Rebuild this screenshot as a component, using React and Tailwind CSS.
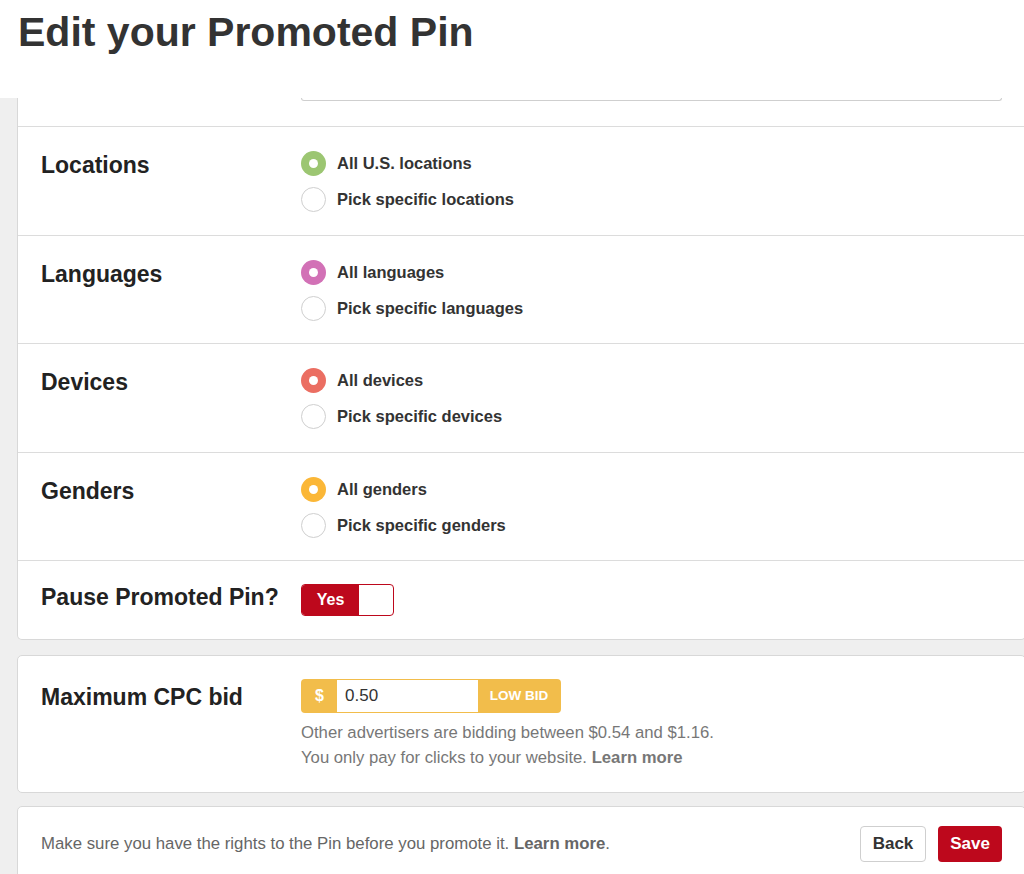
import React, { useState } from "react";

const font = { fontFamily: '"Liberation Sans", Arial, sans-serif' };

function Radio({ checked, color, label }) {
  return (
    <label className="flex items-center h-[25px] cursor-pointer">
      {checked ? (
        <span className={`w-[25px] h-[25px] rounded-full flex items-center justify-center ${color}`}>
          <span className="w-[9px] h-[9px] rounded-full bg-white" />
        </span>
      ) : (
        <span className="w-[25px] h-[25px] rounded-full border border-[#cfcfcf] bg-white" />
      )}
      <span className="ml-[11px] text-[16.5px] font-bold text-[#333]">{label}</span>
    </label>
  );
}

function RadioSection({ title, color, options }) {
  const [value, setValue] = useState(0);
  return (
    <div className="flex border-t border-[#dcdcdc] px-[23px] pt-[24px] pb-[22.5px]">
      <div className="w-[260px] text-[23px] font-bold text-[#222] leading-[28px]">{title}</div>
      <div className="flex flex-col gap-[11px]">
        {options.map((opt, i) => (
          <div key={opt} onClick={() => setValue(i)}>
            <Radio checked={value === i} color={color} label={opt} />
          </div>
        ))}
      </div>
    </div>
  );
}

export default function App() {
  const [paused, setPaused] = useState(true);
  const [bid, setBid] = useState("0.50");

  const sections = [
    { title: "Locations", color: "bg-[#9cc672]", options: ["All U.S. locations", "Pick specific locations"] },
    { title: "Languages", color: "bg-[#d271b6]", options: ["All languages", "Pick specific languages"] },
    { title: "Devices", color: "bg-[#eb6e62]", options: ["All devices", "Pick specific devices"] },
    { title: "Genders", color: "bg-[#fbb737]", options: ["All genders", "Pick specific genders"] },
  ];

  return (
    <div className="min-h-screen w-full overflow-hidden bg-[#efefef]" style={font}>
      <div className="h-[98px] bg-white px-[18px] pt-[11px]">
        <h1 className="text-[41px] leading-[42px] font-bold text-[#333]">Edit your Promoted Pin</h1>
      </div>

      <div className="pl-[17px] flex flex-col">
        <div className="w-[1009px] bg-white border-x border-b border-[#d8d8d8] rounded-b-[5px]">
          <div className="h-[28px] flex px-[23px]">
            <div className="w-[260px]" />
            <div className="flex-1 h-[3px] border-x border-b border-[#cfcfcf] rounded-b-[4px]" />
          </div>

          {sections.map((s) => (
            <RadioSection key={s.title} {...s} />
          ))}

          <div className="flex items-center border-t border-[#dcdcdc] h-[79px] px-[23px]">
            <div className="w-[260px] text-[23px] leading-[28px] font-bold text-[#222] pb-[7px]">Pause Promoted Pin?</div>
            <button
              onClick={() => setPaused(!paused)}
              className="flex w-[93px] h-[32px] rounded-[4px] border border-[#bd081c] overflow-hidden bg-white"
            >
              <span className="w-[57px] h-full bg-[#bd081c] text-white text-[16px] font-bold flex items-center justify-center">
                {paused ? "Yes" : "No"}
              </span>
              <span className="flex-1" />
            </button>
          </div>
        </div>

        <div className="mt-[15px] w-[1009px] bg-white border border-[#d8d8d8] rounded-[5px] px-[23px] pt-[23px] pb-[22px] flex">
          <div className="w-[260px] text-[23px] leading-[28px] font-bold text-[#222] pt-[4px]">Maximum CPC bid</div>
          <div>
            <div className="flex h-[34px] w-[260px] rounded-[4px] bg-[#f2bd4b] p-[1px]">
              <span className="w-[35px] flex items-center justify-center text-white font-bold text-[16px]">$</span>
              <input
                value={bid}
                onChange={(e) => setBid(e.target.value)}
                className="w-[141px] bg-white px-[8px] text-[17px] text-[#333] outline-none"
                style={font}
              />
              <span className="flex-1 flex items-center justify-center text-white font-bold text-[13.5px]">LOW BID</span>
            </div>
            <p className="mt-[7px] text-[16.7px] leading-[25px] text-[#777]">
              Other advertisers are bidding between $0.54 and $1.16.
              <br />
              You only pay for clicks to your website. <span className="font-bold">Learn more</span>
            </p>
          </div>
        </div>

        <div className="mt-[13px] w-[1009px] bg-white border border-[#d8d8d8] rounded-t-[5px] px-[23px] pt-[19px] pb-[12px] flex items-center justify-between">
          <p className="text-[16.8px] text-[#666]">
            Make sure you have the rights to the Pin before you promote it. <span className="font-bold">Learn more</span>.
          </p>
          <div className="flex gap-[12px]">
            <button className="h-[36px] w-[66px] rounded-[4px] border border-[#cfcfcf] bg-white text-[17px] font-bold text-[#333]">
              Back
            </button>
            <button className="h-[36px] w-[64px] rounded-[4px] bg-[#bd081c] text-[17px] font-bold text-white">
              Save
            </button>
          </div>
        </div>
      </div>
    </div>
  );
}
